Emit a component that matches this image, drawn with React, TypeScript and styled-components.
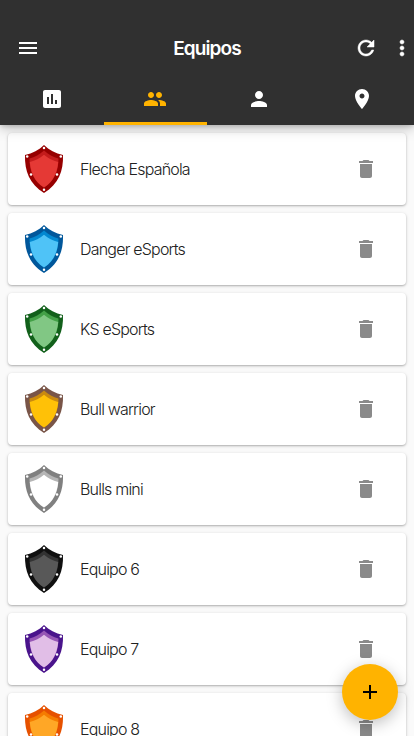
import React from "react";
import styled, { createGlobalStyle } from "styled-components";

const GlobalStyle = createGlobalStyle`
  * { box-sizing: border-box; }
  html, body { margin: 0; height: 100%; overflow: hidden; }
  body { background: #fafafa; font-family: Inter, Roboto, sans-serif; }
`;

const Screen = styled.div`
  display: flex;
  flex-direction: column;
  height: 100vh;
  overflow: hidden;
  background: #fafafa;
`;

const Header = styled.header`
  flex: none;
  height: 125px;
  padding-top: 20px;
  background: #303030;
  color: #fff;
  z-index: 1;
  box-shadow: 0 2px 4px -1px rgba(0, 0, 0, 0.15), 0 3px 12px rgba(0, 0, 0, 0.26);
`;

const Toolbar = styled.div`
  display: grid;
  grid-template-columns: 56px 1fr 56px;
  align-items: center;
  height: 56px;
`;

const IconButton = styled.button`
  display: flex;
  align-items: center;
  justify-content: center;
  padding: 0;
  border: 0;
  background: none;
  color: inherit;
`;

const Title = styled.h1`
  margin: 0;
  text-align: center;
  font-size: 19px;
  font-weight: 600;
  line-height: 26px;
  padding-top: 1px;
  letter-spacing: -0.9px;
`;

const Actions = styled.div`
  display: flex;
  justify-content: flex-end;
  gap: 12px;
`;

const Tabs = styled.nav`
  display: grid;
  grid-template-columns: repeat(4, 1fr);
  height: 49px;
`;

const Tab = styled.button<{ $active?: boolean }>`
  display: flex;
  align-items: center;
  justify-content: center;
  padding: 0 0 3px;
  border: 0;
  background: none;
  color: ${(p) => (p.$active ? "#ffb300" : "#fff")};
  box-shadow: ${(p) => (p.$active ? "inset 0 -3px #ffb300" : "none")};
`;

const List = styled.ul`
  display: flex;
  flex-direction: column;
  gap: 8px;
  margin: 0;
  padding: 8px;
  list-style: none;
`;

const Card = styled.li`
  display: flex;
  flex: none;
  align-items: center;
  height: 72px;
  padding: 0 28px 0 12px;
  border-radius: 4px;
  background: #fff;
  box-shadow: 0 1px 2px rgba(0, 0, 0, 0.24), 0 1px 4px rgba(0, 0, 0, 0.1);
`;

const TeamName = styled.span`
  flex: 1;
  margin-left: 12px;
  color: #212121;
  font-size: 16px;
  font-weight: 300;
  line-height: 24px;
  letter-spacing: -0.8px;
`;

const AddButton = styled.button`
  position: fixed;
  right: 16px;
  bottom: 16px;
  z-index: 2;
  display: flex;
  align-items: center;
  justify-content: center;
  width: 56px;
  height: 56px;
  padding: 0;
  border: 0;
  border-radius: 50%;
  background: #ffb300;
  color: #000;
  box-shadow: 0 4px 16px rgba(0, 0, 0, 0.26);
`;

const Glyph = styled.svg<{ $bold?: boolean }>`
  display: block;
  flex: none;
  fill: currentColor;
  stroke: ${(p) => (p.$bold ? "currentColor" : "none")};
  stroke-width: 0.5px;
`;

const DeleteGlyph = styled(Glyph)`
  color: #8a8a8a;
`;

const paths = {
  menu: "M3 18h18v-2H3v2zm0-5h18v-2H3v2zm0-7v2h18V6H3z",
  refresh:
    "M17.65 6.35C16.2 4.9 14.21 4 12 4c-4.42 0-7.99 3.58-7.99 8s3.57 8 7.99 8c3.73 0 6.84-2.55 7.73-6h-2.08c-.82 2.33-3.04 4-5.65 4-3.31 0-6-2.69-6-6s2.69-6 6-6c1.66 0 3.14.69 4.22 1.78L13 11h7V4l-2.35 2.35z",
  more: "M12 8c1.1 0 2-.9 2-2s-.9-2-2-2-2 .9-2 2 .9 2 2 2zm0 2c-1.1 0-2 .9-2 2s.9 2 2 2 2-.9 2-2-.9-2-2-2zm0 6c-1.1 0-2 .9-2 2s.9 2 2 2 2-.9 2-2-.9-2-2-2z",
  chart:
    "M19 3H5c-1.1 0-2 .9-2 2v14c0 1.1.9 2 2 2h14c1.1 0 2-.9 2-2V5c0-1.1-.9-2-2-2zM9 17H7v-7h2v7zm4 0h-2V7h2v10zm4 0h-2v-4h2v4z",
  people:
    "M16 11c1.66 0 2.99-1.34 2.99-3S17.66 5 16 5c-1.66 0-3 1.34-3 3s1.34 3 3 3zm-8 0c1.66 0 2.99-1.34 2.99-3S9.66 5 8 5C6.34 5 5 6.34 5 8s1.34 3 3 3zm0 2c-2.33 0-7 1.17-7 3.5V19h14v-2.5c0-2.33-4.67-3.5-7-3.5zm8 0c-.29 0-.62.02-.97.05 1.16.84 1.97 1.97 1.97 3.45V19h6v-2.5c0-2.33-4.67-3.5-7-3.5z",
  person:
    "M12 12c2.21 0 4-1.79 4-4s-1.79-4-4-4-4 1.79-4 4 1.79 4 4 4zm0 2c-2.67 0-8 1.34-8 4v2h16v-2c0-2.66-5.33-4-8-4z",
  place:
    "M12 2C8.13 2 5 5.13 5 9c0 5.25 7 13 7 13s7-7.75 7-13c0-3.87-3.13-7-7-7zm0 9.5c-1.38 0-2.5-1.12-2.5-2.5s1.12-2.5 2.5-2.5 2.5 1.12 2.5 2.5-1.12 2.5-2.5 2.5z",
  trash: "M6 19c0 1.1.9 2 2 2h8c1.1 0 2-.9 2-2V7H6v12zM19 4h-3.5l-1-1h-5l-1 1H5v2h14V4z",
  add: "M19 13h-6v6h-2v-6H5v-2h6V5h2v6h6v2z",
};

const Icon = ({ name, bold }: { name: keyof typeof paths; bold?: boolean }) => (
  <Glyph $bold={bold} width="24" height="24" viewBox="0 0 24 24">
    <path d={paths[name]} />
  </Glyph>
);

interface Team {
  name: string;
  rim: string;
  shade: string;
  face: string;
}

const teams: Team[] = [
  { name: "Flecha Española", rim: "#960000", shade: "#c41c1c", face: "#e53935" },
  { name: "Danger eSports", rim: "#01579b", shade: "#0288d1", face: "#4fc3f7" },
  { name: "KS eSports", rim: "#12601b", shade: "#43a047", face: "#81c784" },
  { name: "Bull warrior", rim: "#795548", shade: "#c98a10", face: "#ffc107" },
  { name: "Bulls mini", rim: "#808080", shade: "#b5b5b5", face: "#ffffff" },
  { name: "Equipo 6", rim: "#101010", shade: "#333333", face: "#585858" },
  { name: "Equipo 7", rim: "#4a148c", shade: "#9656b5", face: "#e1bee7" },
  { name: "Equipo 8", rim: "#e65100", shade: "#f57c00", face: "#ffa726" },
];

const rivets = [
  [24, 2.9],
  [7.2, 11.6],
  [40.8, 11.6],
  [11, 29.4],
  [37, 29.4],
  [24, 44.7],
];

const Shield = ({ rim, shade, face }: Omit<Team, "name">) => (
  <Glyph width="48" height="48" viewBox="0 0 48 48">
    <path
      fill={rim}
      d="M24 0C19 5 12.5 8.5 5 10C4.5 26 9.5 39 24 48C38.5 39 43.5 26 43 10C35.5 8.5 29 5 24 0Z"
    />
    <path
      fill={shade}
      d="M24 5.5C19.5 9.5 15 12 9.5 13.5C9.500 26 13.5 36 24 42.5C34.5 36 38.5 26 38.5 13.5C33 12 28.5 9.5 24 5.5Z"
    />
    <path
      fill={face}
      d="M24 9.8C19.5 13.4 15.5 15.7 9.800 17C10.800 28 15 37 24 42.5C33 37 37.200 28 38.200 17C32.5 15.7 28.5 13.4 24 9.8Z"
    />
    {rivets.map(([x, y]) => (
      <circle key={`${x}-${y}`} cx={x} cy={y} r="1.25" fill="#fff" />
    ))}
  </Glyph>
);

export default function App() {
  return (
    <Screen>
      <GlobalStyle />
      <Header>
        <Toolbar>
          <IconButton aria-label="Menú">
            <Icon name="menu" />
          </IconButton>
          <Title>Equipos</Title>
          <Actions>
            <IconButton aria-label="Actualizar">
              <Icon name="refresh" bold />
            </IconButton>
            <IconButton aria-label="Más opciones">
              <Icon name="more" bold />
            </IconButton>
          </Actions>
        </Toolbar>
        <Tabs>
          <Tab aria-label="Estadísticas">
            <Icon name="chart" />
          </Tab>
          <Tab $active aria-label="Equipos">
            <Icon name="people" />
          </Tab>
          <Tab aria-label="Jugadores">
            <Icon name="person" />
          </Tab>
          <Tab aria-label="Lugares">
            <Icon name="place" />
          </Tab>
        </Tabs>
      </Header>
      <List>
        {teams.map(({ name, ...colors }) => (
          <Card key={name}>
            <Shield {...colors} />
            <TeamName>{name}</TeamName>
            <IconButton aria-label={`Eliminar ${name}`}>
              <DeleteGlyph width="24" height="24" viewBox="0 0 24 24">
                <path d={paths.trash} />
              </DeleteGlyph>
            </IconButton>
          </Card>
        ))}
      </List>
      <AddButton aria-label="Añadir equipo">
        <Icon name="add" />
      </AddButton>
    </Screen>
  );
}
